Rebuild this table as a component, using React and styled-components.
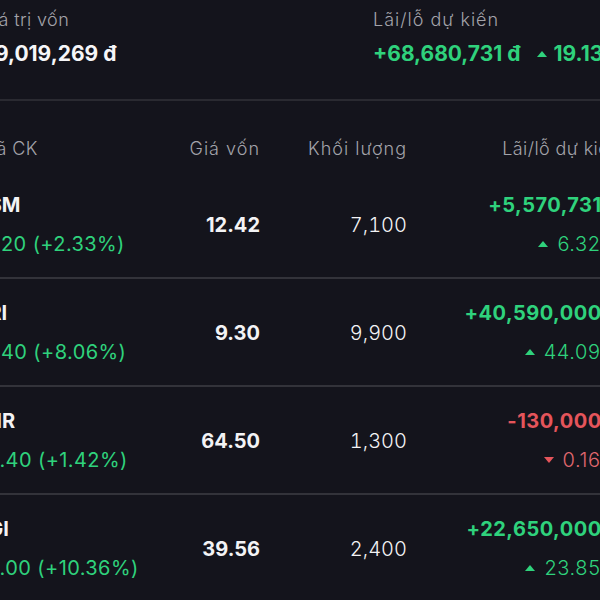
import styled, { createGlobalStyle } from "styled-components";

const GlobalStyle = createGlobalStyle`
  body {
    margin: 0;
    background: #14141c;
    overflow: hidden;
    font-family: Inter, "Noto Sans", sans-serif;
  }
`;

const GREEN = "#2fd27c";
const RED = "#e5555b";
const COLUMNS = "144px 136px 147px 213px";

const Page = styled.div`
  margin-left: -20px;
  width: 640px;
  color: #f3f3f5;
`;

const Summary = styled.section`
  display: grid;
  grid-template-columns: 393px 1fr;
  padding: 8px 0 31px;
  border-bottom: 2px solid #2a2a31;
`;

const SummaryItem = styled.div`
  display: flex;
  flex-direction: column;
  gap: 8px;
`;

const Label = styled.div`
  font-size: 18px;
  line-height: 24px;
  font-weight: 300;
  letter-spacing: ${(p) => (p.$wide ? "1px" : "0.4px")};
  color: #a3a3aa;
  white-space: nowrap;
  text-align: ${(p) => (p.$right ? "right" : "left")};
`;

const BigValue = styled.div`
  display: flex;
  align-items: center;
  gap: 16px;
  margin-left: ${(p) => (p.$pull ? "-12px" : "0")};
  font-size: 21px;
  line-height: 28px;
  font-weight: 700;
  color: ${(p) => p.$color || "#f6f6f8"};
  white-space: nowrap;
`;

const Percent = styled.span`
  display: inline-flex;
  align-items: center;
  gap: ${(p) => (p.$small ? "9px" : "7px")};
  font-weight: ${(p) => p.$weight || 300};
  letter-spacing: ${(p) => (p.$small ? "0.6px" : "0")};
  color: ${(p) => p.$color};
`;

const Triangle = styled.span`
  width: 0;
  height: 0;
  border-left: 5px solid transparent;
  border-right: 5px solid transparent;
  ${(p) =>
    p.$down
      ? `border-top: 6px solid ${p.$color};`
      : `border-bottom: 6px solid ${p.$color};`}
`;

const HeaderRow = styled.div`
  display: grid;
  grid-template-columns: ${COLUMNS};
  padding: 36px 0 10px;
`;

const Row = styled.div`
  display: grid;
  grid-template-columns: ${COLUMNS};
  align-items: center;
  padding: 20px 0 19px;
  border-bottom: 2px solid #33333a;
`;

const StockCell = styled.div`
  display: flex;
  flex-direction: column;
  gap: 11px;
  margin-left: -6px;
  white-space: nowrap;
`;

const Ticker = styled.div`
  font-size: 20px;
  line-height: 28px;
  font-weight: 700;
`;

const Change = styled.div`
  font-size: 20px;
  line-height: 28px;
  font-weight: 400;
  letter-spacing: 0.4px;
  color: ${(p) => p.$color};
`;

const Num = styled.div`
  text-align: right;
  font-size: 20px;
  line-height: 28px;
  font-weight: ${(p) => (p.$bold ? 700 : 300)};
  font-variant-numeric: ${(p) => (p.$bold ? "normal" : "tabular-nums")};
  white-space: nowrap;
`;

const PnlCell = styled.div`
  display: flex;
  flex-direction: column;
  align-items: flex-end;
  gap: 11px;
  white-space: nowrap;
`;

const PnlValue = styled.div`
  font-size: 20px;
  line-height: 28px;
  font-weight: 700;
  letter-spacing: 0.5px;
  color: ${(p) => p.$color};
`;

const PnlPercent = styled.div`
  display: flex;
  height: 28px;
  align-items: center;
  font-size: 20px;
`;

const stocks = [
  { ticker: "ASM", price: "13.20", change: "+2.33%", cost: "12.42", vol: "7,100", pnl: "+5,570,731 đ", pct: "6.32%", up: true },
  { ticker: "DRI", price: "13.40", change: "+8.06%", cost: "9.30", vol: "9,900", pnl: "+40,590,000 đ", pct: "44.09%", up: true },
  { ticker: "PHR", price: "64.40", change: "+1.42%", cost: "64.50", vol: "1,300", pnl: "-130,000 đ", pct: "0.16%", up: false },
  { ticker: "VGI", price: "49.00", change: "+10.36%", cost: "39.56", vol: "2,400", pnl: "+22,650,000 đ", pct: "23.85%", up: true },
];

export default function App() {
  return (
    <Page>
      <GlobalStyle />
      <Summary>
        <SummaryItem>
          <Label>Giá trị vốn</Label>
          <BigValue $pull>359,019,269 đ</BigValue>
        </SummaryItem>
        <SummaryItem>
          <Label $wide>Lãi/lỗ dự kiến</Label>
          <BigValue $color={GREEN}>
            +68,680,731 đ
            <Percent $color={GREEN} $weight={700}>
              <Triangle $color={GREEN} />
              19.13%
            </Percent>
          </BigValue>
        </SummaryItem>
      </Summary>

      <HeaderRow>
        <Label>Mã CK</Label>
        <Label $right $wide>Giá vốn</Label>
        <Label $right $wide>Khối lượng</Label>
        <Label $right>Lãi/lỗ dự kiến</Label>
      </HeaderRow>

      {stocks.map((s) => {
        const color = s.up ? GREEN : RED;
        return (
          <Row key={s.ticker}>
            <StockCell>
              <Ticker>{s.ticker}</Ticker>
              <Change $color={GREEN}>
                {s.price} ({s.change})
              </Change>
            </StockCell>
            <Num $bold>{s.cost}</Num>
            <Num>{s.vol}</Num>
            <PnlCell>
              <PnlValue $color={color}>{s.pnl}</PnlValue>
              <PnlPercent>
                <Percent $small $color={s.up ? GREEN : "#e0686e"}>
                  <Triangle $color={color} $down={!s.up} />
                  {s.pct}
                </Percent>
              </PnlPercent>
            </PnlCell>
          </Row>
        );
      })}
    </Page>
  );
}
